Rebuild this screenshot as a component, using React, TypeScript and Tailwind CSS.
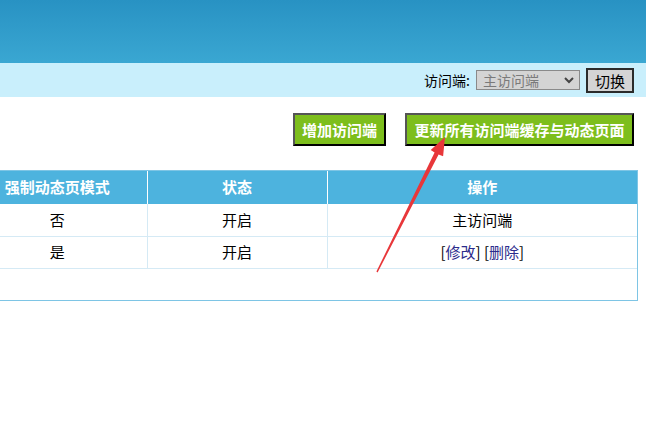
import React from 'react';

const cjk = { fontFamily: '"Noto Sans CJK SC", "Microsoft YaHei", sans-serif' };

const rows = [
  { mode: '否', status: '开启', main: true },
  { mode: '是', status: '开启', main: false },
];

export default function App() {
  return (
    <div className="relative w-[646px] h-[430px] overflow-hidden bg-white text-black" style={cjk}>
      {/* top banner */}
      <div className="h-[63px] bg-gradient-to-b from-[#2892c3] to-[#3aa7d2]" />

      {/* access switcher bar */}
      <div className="h-[34px] bg-[#c9effc] flex items-center justify-end pr-[12px] text-[14px]">
        <span className="mr-[6px]">访问端:</span>
        <div className="w-[104px] h-[20px] bg-[#d4d4d4] border border-[#8a8a8a] flex items-center justify-between pl-[6px] pr-[4px] text-[#7a7a7a] leading-none">
          <span>主访问端</span>
          <svg width="12" height="10" viewBox="0 0 12 10">
            <path d="M2 3 L6 7 L10 3" fill="none" stroke="#444" strokeWidth="2" />
          </svg>
        </div>
        <button className="ml-[6px] w-[48px] h-[25px] bg-[#d4d4d4] border-2 border-[#2b2b2b] text-[15px] leading-none flex items-center justify-center">
          切换
        </button>
      </div>

      {/* action buttons */}
      <div className="flex justify-end gap-[19px] pr-[12px] mt-[16px]">
        <button className="w-[93px] h-[33px] bg-[#7dbe1c] border-2 border-t-[#555] border-l-[#555] border-r-black border-b-black text-white font-bold text-[15px] leading-none">
          增加访问端
        </button>
        <button className="w-[229px] h-[33px] bg-[#7dbe1c] border-2 border-t-[#555] border-l-[#555] border-r-black border-b-black text-white font-bold text-[15px] leading-none">
          更新所有访问端缓存与动态页面
        </button>
      </div>

      {/* table */}
      <div className="mt-[24px] ml-[-33px] w-[671px] border border-[#7ec5e5] pb-[31px]">
        <table className="w-full border-collapse text-[15px]">
          <thead>
            <tr className="h-[33px] bg-[#4db3de] text-white font-bold">
              <th className="w-[179px] font-bold border-r border-white">强制动态页模式</th>
              <th className="w-[180px] font-bold border-r border-white">状态</th>
              <th className="font-bold">操作</th>
            </tr>
          </thead>
          <tbody>
            {rows.map((r, i) => (
              <tr key={i} className="h-[32px] border-b border-[#d5eaf5]">
                <td className="text-center border-r border-[#d5eaf5]">{r.mode}</td>
                <td className="text-center border-r border-[#d5eaf5]">{r.status}</td>
                <td className="text-center">
                  {r.main ? (
                    '主访问端'
                  ) : (
                    <>
                      [<span className="text-[#2c2c8c]">修改</span>] [<span className="text-[#2c2c8c]">删除</span>]
                    </>
                  )}
                </td>
              </tr>
            ))}
          </tbody>
        </table>
      </div>

      {/* annotation arrow */}
      <svg className="absolute left-0 top-0 pointer-events-none" width="646" height="430">
        <polygon
          points="377.6,272.4 376.4,271.6 434.6,152.6 430.7,149.9 445,137 443.1,156.3 438.6,154.4"
          fill="#e8373a"
        />
      </svg>
    </div>
  );
}
